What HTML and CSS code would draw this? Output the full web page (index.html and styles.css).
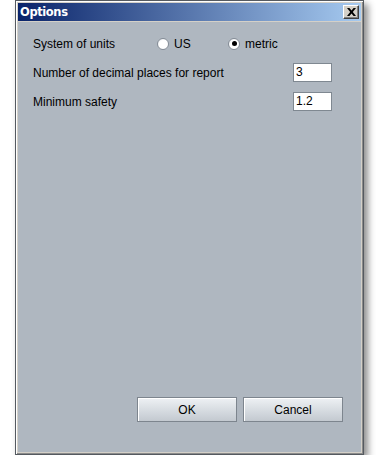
FILE: index.html
```html
<!DOCTYPE html>
<html>
<head>
<meta charset="utf-8">
<link rel="stylesheet" href="styles.css">
</head>
<body>
<div class="stage">
  <div class="window">
    <div class="titlebar">
      <span class="title">Options</span>
      <span class="close">
        <svg width="9" height="8" viewBox="0 0 9 8"><path d="M0 0h2.4L4.5 2.6 6.6 0H9L5.8 4 9 8H6.6L4.5 5.4 2.4 8H0l3.2-4z" fill="#000"/></svg>
      </span>
    </div>
    <div class="content">
      <div class="row">
        <span class="label">System of units</span>
        <span class="opt"><span class="radio"></span>US</span>
        <span class="opt"><span class="radio on"></span>metric</span>
      </div>
      <div class="row field-row">
        <span>Number of decimal places for report</span>
        <span class="field">3</span>
      </div>
      <div class="row field-row">
        <span>Minimum safety</span>
        <span class="field">1.2</span>
      </div>
      <div class="buttons">
        <span class="btn">OK</span>
        <span class="btn">Cancel</span>
      </div>
    </div>
  </div>
</div>
</body>
</html>
```
FILE: styles.css
```css
html, body {
  margin: 0;
  padding: 0;
  background: #ffffff;
}
body {
  font-family: "Liberation Sans", Arial, sans-serif;
  font-size: 12px;
  color: #000;
}
.stage {
  padding-left: 15px;
}
.window {
  width: 349px;
  height: 455px;
  box-sizing: border-box;
  border: 1px solid #555a60;
  background: #d4d0c8;
  padding: 2px;
  box-shadow: inset 1px 1px 0 #ffffff, inset -1px -1px 0 #8a8a8a, 4px 4px 7px rgba(0,0,0,0.45);
  display: flex;
  flex-direction: column;
}
.titlebar {
  height: 18px;
  flex: none;
  background: linear-gradient(to right, #0a246a, #a6caf0);
  display: flex;
  align-items: center;
  justify-content: space-between;
  padding: 0 2px 0 2px;
}
.title {
  color: #fff;
  font-family: "DejaVu Sans", sans-serif;
  font-weight: bold;
  font-size: 11.5px;
  letter-spacing: -0.4px;
}
.close {
  width: 16px;
  height: 14px;
  box-sizing: border-box;
  background: #d4d0c8;
  border: 1px solid;
  border-color: #ffffff #404040 #404040 #ffffff;
  box-shadow: inset -1px -1px 0 #808080;
  display: flex;
  align-items: center;
  justify-content: center;
}
.content {
  flex: 1;
  background: #afb7c0;
  margin-top: 1px;
  padding: 12px 29px 30px 15px;
  display: flex;
  flex-direction: column;
  gap: 10px;
}
.row {
  height: 19px;
  display: flex;
  align-items: center;
}
.label {
  width: 124px;
}
.opt {
  width: 71px;
  display: flex;
  align-items: center;
  gap: 5px;
}
.radio {
  width: 12px;
  height: 12px;
  box-sizing: border-box;
  border-radius: 50%;
  background: radial-gradient(circle at 60% 60%, #ffffff 55%, #dde1e6 100%);
  border: 1px solid #858d97;
  display: flex;
  align-items: center;
  justify-content: center;
}
.radio.on::after {
  content: "";
  width: 5px;
  height: 5px;
  border-radius: 50%;
  background: #000;
}
.field-row {
  justify-content: space-between;
}
.field {
  width: 39px;
  height: 19px;
  box-sizing: border-box;
  background: #fff;
  border: 1px solid #7f8891;
  padding-left: 2px;
  line-height: 17px;
}
.buttons {
  margin-top: auto;
  display: flex;
  justify-content: flex-end;
  gap: 6px;
  margin-right: -11px;
}
.btn {
  width: 100px;
  height: 25px;
  box-sizing: border-box;
  border: 1px solid #7d858e;
  background: linear-gradient(to bottom, #eef1f4, #d8dde2 50%, #c3c9d0);
  box-shadow: inset 1px 1px 0 #ffffff;
  display: flex;
  align-items: center;
  justify-content: center;
}
```
